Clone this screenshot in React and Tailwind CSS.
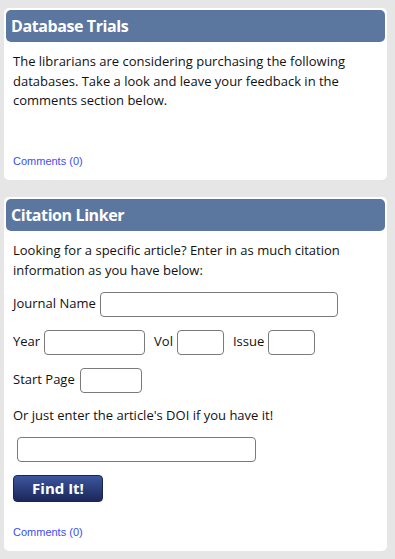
import React from 'react';

const body = { fontFamily: '"Open Sans", "Liberation Sans", sans-serif' };
const link = { fontFamily: '"Liberation Sans", Arial, sans-serif' };

function Header({ title }) {
  return (
    <div className="h-8 rounded-[5px] bg-[#5b769f] px-[5px] flex items-center">
      <h2 className="text-[16px] font-bold tracking-[-0.4px] text-white leading-none" style={body}>{title}</h2>
    </div>
  );
}

function Comments() {
  return (
    <a href="#" className="block text-[11px] leading-[13px] text-[#3b4ef0]" style={link}>
      Comments (0)
    </a>
  );
}

function Field({ width }) {
  return <input type="text" className={`h-[25px] ${width} rounded-[4px] border border-[#7a7a7a] bg-white`} />;
}

export default function App() {
  return (
    <div className="min-h-screen bg-[#e6e6e6] pt-2 pl-1 pr-2" style={body}>
      <div className="bg-white rounded-[5px] p-0.5 pb-3">
        <Header title="Database Trials" />
        <div className="px-[7px]">
          <p className="mt-[10px] text-[13px] leading-[19.5px] text-[#111]">
            The librarians are considering purchasing the following databases. Take a look and leave your feedback in the comments section below.
          </p>
          <div className="mt-[44px]">
            <Comments />
          </div>
        </div>
      </div>

      <div className="mt-[17px] bg-white rounded-[5px] p-0.5 pb-3">
        <Header title="Citation Linker" />
        <div className="px-[7px] text-[13px] text-[#111]">
          <p className="mt-[9px] leading-5">
            Looking for a specific article? Enter in as much citation information as you have below:
          </p>
          <div className="mt-3 flex items-center gap-1">
            <span>Journal Name</span>
            <Field width="w-[238px]" />
          </div>
          <div className="mt-[13px] flex items-center">
            <span>Year</span>
            <span className="ml-[4px]"><Field width="w-[101px]" /></span>
            <span className="ml-[9px]">Vol</span>
            <span className="ml-[4px]"><Field width="w-[47px]" /></span>
            <span className="ml-[9px]">Issue</span>
            <span className="ml-[4px]"><Field width="w-[47px]" /></span>
          </div>
          <div className="mt-[13px] flex items-center gap-[5px]">
            <span>Start Page</span>
            <Field width="w-[62px]" />
          </div>
          <p className="mt-3 leading-5">Or just enter the article's DOI if you have it!</p>
          <div className="mt-3 pl-1">
            <Field width="w-[239px]" />
          </div>
          <button className="mt-[13px] h-[27px] w-[90px] rounded-[4px] border border-[#1a2550] bg-gradient-to-b from-[#3d56a0] to-[#1b2858] text-[15px] font-bold text-white">
            Find It!
          </button>
          <div className="mt-[24px]">
            <Comments />
          </div>
        </div>
      </div>
    </div>
  );
}
